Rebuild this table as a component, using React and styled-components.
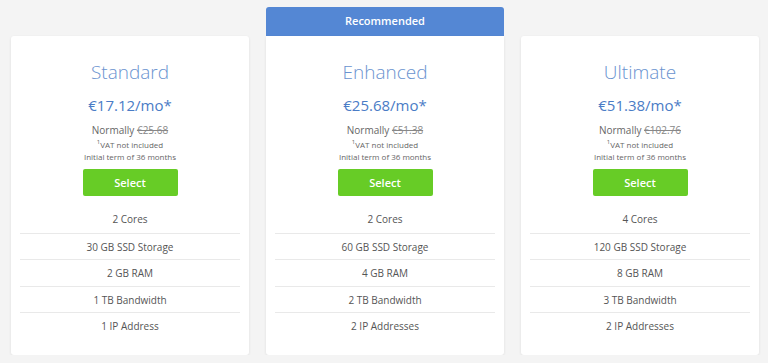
import styled, { createGlobalStyle } from 'styled-components';

const GlobalStyle = createGlobalStyle`
  body {
    margin: 0;
    background: #f4f4f4;
    font-family: "Open Sans", "Liberation Sans", sans-serif;
  }
`;

const Plans = styled.div`
  display: grid;
  grid-template-columns: repeat(3, 238px);
  column-gap: 17px;
  padding: 7px 0 0 11px;
`;

const Column = styled.div`
  display: flex;
  flex-direction: column;
`;

const Banner = styled.div`
  height: 29px;
  line-height: 28px;
  text-align: center;
  font-size: 11px;
  font-weight: 600;
  color: #fff;
  background: ${(p) => (p.$show ? '#5487d4' : 'transparent')};
  border-radius: 3px 3px 0 0;
`;

const Card = styled.div`
  background: #fff;
  border-radius: ${(p) => (p.$flat ? '0 0 3px 3px' : '3px')};
  box-shadow: 0 1px 3px rgba(0, 0, 0, 0.09);
  padding: 22px 9px 16px;
  display: flex;
  flex-direction: column;
  align-items: center;
  text-align: center;
`;

const Title = styled.div`
  font-size: 19px;
  font-weight: 300;
  line-height: 28px;
  color: #6a93cf;
`;

const Price = styled.div`
  margin-top: 8px;
  font-size: 15px;
  font-weight: 500;
  line-height: 22px;
  color: #4a7cc6;
`;

const Normally = styled.div`
  margin-top: 6px;
  font-size: 10px;
  line-height: 16px;
  color: #666;

  s {
    color: #888;
  }
`;

const Note = styled.div`
  margin-top: ${(p) => (p.$first ? '1px' : '0')};
  font-size: 8px;
  line-height: ${(p) => (p.$first ? '12px' : '11px')};
  color: #666;

  sup {
    font-size: 6px;
    line-height: 0;
  }
`;

const SelectButton = styled.div`
  margin-top: 7px;
  width: 95px;
  height: 27px;
  line-height: 27px;
  background: #67cc26;
  border-radius: 2px;
  color: #fff;
  font-size: 11px;
  font-weight: 600;
  cursor: pointer;
`;

const Features = styled.ul`
  list-style: none;
  margin: 10px 0 0;
  padding: 0;
  align-self: stretch;
`;

const Feature = styled.li`
  height: 26.6px;
  line-height: 26.6px;
  font-size: 10px;
  color: #555;
  border-top: ${(p) => (p.$first ? 'none' : '1px solid #e9e9e9')};
  box-sizing: border-box;
`;

const plans = [
  {
    name: 'Standard',
    price: '€17.12/mo*',
    normal: '€25.68',
    features: ['2 Cores', '30 GB SSD Storage', '2 GB RAM', '1 TB Bandwidth', '1 IP Address'],
  },
  {
    name: 'Enhanced',
    price: '€25.68/mo*',
    normal: '€51.38',
    recommended: true,
    features: ['2 Cores', '60 GB SSD Storage', '4 GB RAM', '2 TB Bandwidth', '2 IP Addresses'],
  },
  {
    name: 'Ultimate',
    price: '€51.38/mo*',
    normal: '€102.76',
    features: ['4 Cores', '120 GB SSD Storage', '8 GB RAM', '3 TB Bandwidth', '2 IP Addresses'],
  },
];

function App() {
  return (
    <>
      <GlobalStyle />
      <Plans>
        {plans.map((plan) => (
          <Column key={plan.name}>
            <Banner $show={plan.recommended}>{plan.recommended ? 'Recommended' : ''}</Banner>
            <Card $flat={plan.recommended}>
              <Title>{plan.name}</Title>
              <Price>{plan.price}</Price>
              <Normally>
                Normally <s>{plan.normal}</s>
              </Normally>
              <Note $first>
                <sup>1</sup>VAT not included
              </Note>
              <Note>Initial term of 36 months</Note>
              <SelectButton>Select</SelectButton>
              <Features>
                {plan.features.map((f, i) => (
                  <Feature key={f} $first={i === 0}>
                    {f}
                  </Feature>
                ))}
              </Features>
            </Card>
          </Column>
        ))}
      </Plans>
    </>
  );
}

export default App;
